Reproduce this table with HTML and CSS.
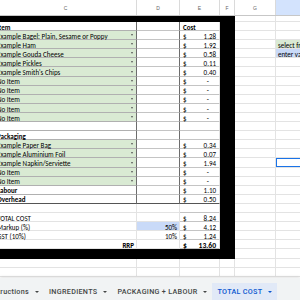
FILE: index.html
```html
<!DOCTYPE html>
<html>
<head>
<meta charset="utf-8">
<link rel="stylesheet" href="styles.css">
</head>
<body>
<div class="sheet">
  <div class="hdr">
    <div class="h">C</div><div class="h">D</div><div class="h">E</div><div class="h">F</div><div class="h">G</div><div class="h hsel"></div>
  </div>
  <div class="row band"><div class="k"></div><div class="k"></div><div class="k"></div><div class="k"></div><div class="c"></div><div class="c"></div></div>

  <div class="row"><div class="c ci b">Item</div><div class="c cd"></div><div class="c ce b">Cost</div><div class="k"></div><div class="c"></div><div class="c"></div></div>
  <div class="row"><div class="c ci g">Example Bagel: Plain, Sesame or Poppy<span class="dd"></span></div><div class="c cd"></div><div class="c ce"><span>$</span><span>1.28</span></div><div class="k"></div><div class="c"></div><div class="c"></div></div>
  <div class="row"><div class="c ci g">Example Ham<span class="dd"></span></div><div class="c cd"></div><div class="c ce"><span>$</span><span>1.92</span></div><div class="k"></div><div class="c"></div><div class="c hg">select from list</div></div>
  <div class="row"><div class="c ci g">Example Gouda Cheese<span class="dd"></span></div><div class="c cd"></div><div class="c ce"><span>$</span><span>0.58</span></div><div class="k"></div><div class="c"></div><div class="c hb">enter value</div></div>
  <div class="row"><div class="c ci g">Example Pickles<span class="dd"></span></div><div class="c cd"></div><div class="c ce"><span>$</span><span>0.11</span></div><div class="k"></div><div class="c"></div><div class="c"></div></div>
  <div class="row"><div class="c ci g">Example Smith's Chips<span class="dd"></span></div><div class="c cd"></div><div class="c ce"><span>$</span><span>0.40</span></div><div class="k"></div><div class="c"></div><div class="c"></div></div>
  <div class="row"><div class="c ci g">No Item<span class="dd"></span></div><div class="c cd"></div><div class="c ce"><span>$</span><span class="dash">-</span></div><div class="k"></div><div class="c"></div><div class="c"></div></div>
  <div class="row"><div class="c ci g">No Item<span class="dd"></span></div><div class="c cd"></div><div class="c ce"><span>$</span><span class="dash">-</span></div><div class="k"></div><div class="c"></div><div class="c"></div></div>
  <div class="row"><div class="c ci g">No Item<span class="dd"></span></div><div class="c cd"></div><div class="c ce"><span>$</span><span class="dash">-</span></div><div class="k"></div><div class="c"></div><div class="c"></div></div>
  <div class="row"><div class="c ci g">No Item<span class="dd"></span></div><div class="c cd"></div><div class="c ce"><span>$</span><span class="dash">-</span></div><div class="k"></div><div class="c"></div><div class="c"></div></div>
  <div class="row"><div class="c ci g">No Item<span class="dd"></span></div><div class="c cd"></div><div class="c ce"><span>$</span><span class="dash">-</span></div><div class="k"></div><div class="c"></div><div class="c"></div></div>
  <div class="row"><div class="c ci"></div><div class="c cd"></div><div class="c ce"></div><div class="k"></div><div class="c"></div><div class="c"></div></div>
  <div class="row"><div class="c ci b">Packaging</div><div class="c cd"></div><div class="c ce"></div><div class="k"></div><div class="c"></div><div class="c"></div></div>
  <div class="row"><div class="c ci g">Example Paper Bag<span class="dd"></span></div><div class="c cd"></div><div class="c ce"><span>$</span><span>0.34</span></div><div class="k"></div><div class="c"></div><div class="c"></div></div>
  <div class="row"><div class="c ci g">Example Aluminium Foil<span class="dd"></span></div><div class="c cd"></div><div class="c ce"><span>$</span><span>0.07</span></div><div class="k"></div><div class="c"></div><div class="c"></div></div>
  <div class="row"><div class="c ci g">Example Napkin/Serviette<span class="dd"></span></div><div class="c cd"></div><div class="c ce"><span>$</span><span>1.94</span></div><div class="k"></div><div class="c"></div><div class="c sel"></div></div>
  <div class="row"><div class="c ci g">No Item<span class="dd"></span></div><div class="c cd"></div><div class="c ce"><span>$</span><span class="dash">-</span></div><div class="k"></div><div class="c"></div><div class="c"></div></div>
  <div class="row"><div class="c ci g">No Item<span class="dd"></span></div><div class="c cd"></div><div class="c ce"><span>$</span><span class="dash">-</span></div><div class="k"></div><div class="c"></div><div class="c"></div></div>
  <div class="row"><div class="c ci b">Labour</div><div class="c cd"></div><div class="c ce"><span>$</span><span>1.10</span></div><div class="k"></div><div class="c"></div><div class="c"></div></div>
  <div class="row"><div class="c ci b last">Overhead</div><div class="c cd last"></div><div class="c ce last"><span>$</span><span>0.50</span></div><div class="k"></div><div class="c"></div><div class="c"></div></div>
  <div class="row"><div class="c"></div><div class="c"></div><div class="c ce"></div><div class="k"></div><div class="c"></div><div class="c"></div></div>
  <div class="row"><div class="c">TOTAL COST</div><div class="c"></div><div class="c ce"><span>$</span><span>8.24</span></div><div class="k"></div><div class="c"></div><div class="c"></div></div>
  <div class="row"><div class="c">Markup (%)</div><div class="c num blue">50%</div><div class="c ce"><span>$</span><span>4.12</span></div><div class="k"></div><div class="c"></div><div class="c"></div></div>
  <div class="row"><div class="c">GST (10%)</div><div class="c num">10%</div><div class="c ce"><span>$</span><span>1.24</span></div><div class="k"></div><div class="c"></div><div class="c"></div></div>
  <div class="row"><div class="c num b">RRP</div><div class="c"></div><div class="c ce b big"><span>$</span><span>13.60</span></div><div class="k"></div><div class="c"></div><div class="c"></div></div>
  <div class="row tall"><div class="k"></div><div class="k"></div><div class="k"></div><div class="k"></div><div class="c"></div><div class="c"></div></div>
  <div class="row tall"><div class="c"></div><div class="c"></div><div class="c"></div><div class="c"></div><div class="c"></div><div class="c"></div></div>
  <div class="row tall"><div class="c"></div><div class="c"></div><div class="c"></div><div class="c"></div><div class="c"></div><div class="c"></div></div>
</div>
<div class="tabs">
  <div class="tab first">Instructions<span class="arr"></span></div>
  <div class="tab">INGREDIENTS<span class="arr"></span></div>
  <div class="tab">PACKAGING + LABOUR<span class="arr"></span></div>
  <div class="tab active">TOTAL COST<span class="arr"></span></div>
</div>
</body>
</html>
```
FILE: styles.css
```css
html, body {
  margin: 0;
  padding: 0;
  width: 300px;
  height: 300px;
  overflow: hidden;
  background: #fff;
  font-family: Carlito, "Liberation Sans", Arial, sans-serif;
}
.sheet {
  margin-left: -5px;
  width: 340px;
  --cols: 142px 43px 40px 15px 41px 59px;
}
.hdr {
  display: grid;
  grid-template-columns: var(--cols);
  height: 16px;
  box-sizing: border-box;
  border-bottom: 1px solid #c7c7c7;
}
.h {
  border-right: 1px solid #dadada;
  font-family: "Liberation Sans", Arial, sans-serif;
  font-size: 5px;
  color: #666;
  display: flex;
  align-items: center;
  justify-content: center;
}
.hsel { background: #d3e3fd; }
.row {
  display: grid;
  grid-template-columns: var(--cols);
  height: 9.1px;
}
.band { height: 6px; }
.tall { height: 9.2px; }
.c {
  box-sizing: border-box;
  border-right: 1px solid #e3e3e3;
  border-bottom: 1px solid #e3e3e3;
  font-size: 7px;
  line-height: 5.4px;
  color: #000;
  padding: 0 2px;
  white-space: nowrap;
  display: flex;
  align-items: flex-end;
  position: relative;
}
.k { background: #000; }
.b { font-weight: bold; }
.ci { border-right-color: #6d6d6d; border-bottom-color: #b0b0b0; }
.cd { border-right-color: #6d6d6d; border-bottom-color: #c4c4c4; }
.ce { border-bottom-color: #c4c4c4; justify-content: space-between; padding: 0 3px 0 3px; }
.last { border-bottom-color: #555; }
.g { background: #d9ead3; }
.dd {
  position: absolute;
  right: 3px;
  bottom: 3px;
  width: 0;
  height: 0;
  border-left: 1.5px solid transparent;
  border-right: 1.5px solid transparent;
  border-top: 2px solid #555;
}
.dash { margin-right: 7px; }
.num { justify-content: flex-end; }
.blue { background: #c9daf8; }
.hg { background: #d9ead3; }
.hb { background: #c9daf8; }
.sel { box-shadow: inset 0 0 0 1px #1a73e8; }
.big { font-size: 7.6px; }
.tabs {
  position: absolute;
  left: 0;
  top: 278px;
  width: 300px;
  height: 22px;
  background: #f1f3f4;
  box-shadow: 0 -1px 3px rgba(0,0,0,0.12);
  display: flex;
  align-items: flex-end;
  font-family: Roboto, "Liberation Sans", sans-serif;
  font-weight: 500;
  font-size: 7.2px;
  letter-spacing: 0.3px;
  color: #444746;
}
.tab {
  height: 17px;
  display: flex;
  align-items: center;
  padding: 0 5px;
  gap: 6px;
  white-space: nowrap;
  flex: none;
}
.first { margin-left: -18px; }
.active { background: #e1e9f7; color: #0b57d0; }
.arr {
  width: 0;
  height: 0;
  border-left: 2px solid transparent;
  border-right: 2px solid transparent;
  border-top: 2px solid currentColor;
}
```
